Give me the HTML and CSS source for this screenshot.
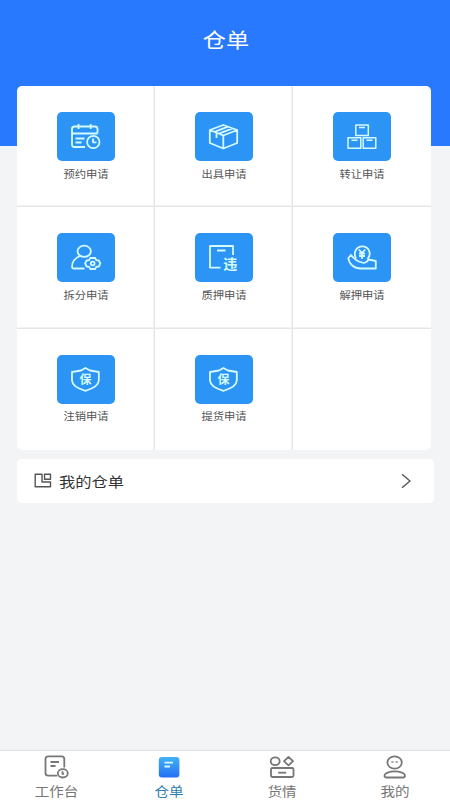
FILE: index.html
```html
<!DOCTYPE html>
<html lang="zh-CN">
<head>
<meta charset="utf-8">
<title>仓单</title>
<link rel="stylesheet" href="styles.css">
</head>
<body>
<div class="app">
  <header class="header"><h1 class="title">仓单</h1></header>
  <main class="main">
    <section class="grid">
      <a class="cell"><svg class="tile" viewBox="0 0 58 49"><path d="M40.500 21.500V17q0-2.500-2.500-2.500H17.500Q15 14.500 15 17v15.500q0 2.500 2.500 2.500H28M15 21.500h25.500M21.500 12v5M33.700 12v5M18.500 26.500h9M18.500 30.500h6"/><circle cx="36.300" cy="30" r="6.200"/><path d="M36 26.500V30.300h3.500"/></svg><span class="label">预约申请</span></a>
      <a class="cell"><svg class="tile" viewBox="0 0 58 49"><path d="M28.300 13L42.200 18V31L28.300 36.500 14.800 31V18ZM14.800 18L28.300 23.500 42.200 18M28.300 23.500V36.500M19.500 19.800L33 14.700M24 21.700L37.500 16.400M21.500 21V26"/></svg><span class="label">出具申请</span></a>
      <a class="cell"><svg class="tile thin" viewBox="0 0 58 49"><path d="M22.800 13h12.500v10.500H22.800ZM15 25.800h12.800v10.500H15ZM30.200 25.800h12.600v10.500H30.200ZM26 15.500h6M18.500 28.300h6M33.500 28.300h6"/></svg><span class="label">转让申请</span></a>
      <a class="cell"><svg class="tile" viewBox="0 0 58 49"><ellipse cx="27.200" cy="18.300" rx="6.700" ry="5.600"/><path d="M23 23C18 25 15 29 15 34Q15 35.500 16.500 35.500H27.500"/><path d="M33.200 25h5l1 2.200 2.600.3 1.500 3-1.500 3-2.600.3-1 2.200h-5l-1-2.200-2.600-.3-1.500-3 1.500-3 2.600-.3Z"/><circle cx="35.700" cy="30.500" r="1.900"/></svg><span class="label">拆分申请</span></a>
      <a class="cell"><svg class="tile" viewBox="0 0 58 49"><path d="M38 22V13H15V34.700H25.500M22 17.500h8.500"/><text class="wei" x="28.300" y="36">违</text></svg><span class="label">质押申请</span></a>
      <a class="cell"><svg class="tile" viewBox="0 0 58 49"><path d="M23 25.500C20 20 23 13.300 29.200 13.300C36 13.300 39 21 34.500 26"/><path d="M25.800 16.500L29 20 32.200 16.500M29 20v6M26 20.500h6M26 23h6"/><path d="M18 22L15.300 25C16 31 21 35.500 28 35.500H42.800V28L35.500 26.500C34 29.500 31 30.500 29 29.500C25 28.500 21 26 18 22Z"/></svg><span class="label">解押申请</span></a>
      <a class="cell"><svg class="tile" viewBox="0 0 58 49"><path d="M28.400 13L33 15.500 41.800 17V25.500Q41.500 32 28.400 35.800Q15.300 32 15 25.500V17L24 15.500Z"/><text class="bao" x="22.400" y="29">保</text></svg><span class="label">注销申请</span></a>
      <a class="cell"><svg class="tile" viewBox="0 0 58 49"><path d="M28.400 13L33 15.500 41.800 17V25.500Q41.500 32 28.400 35.800Q15.300 32 15 25.500V17L24 15.500Z"/><text class="bao" x="22.400" y="29">保</text></svg><span class="label">提货申请</span></a>
      <a class="cell"></a>
    </section>
    <a class="row">
      <svg class="row-icon" viewBox="0 0 18 16"><path d="M8 1.200H1.200V13.800H16.500V9H8ZM10.500 1.200h6v5h-6Z"/></svg>
      <span class="row-text">我的仓单</span>
      <svg class="chevron" viewBox="0 0 10 16"><path d="M1 1.200L9 8 1 14.800"/></svg>
    </a>
  </main>
  <nav class="tabs">
    <a class="tab"><svg class="tab-icon" viewBox="0 0 28 26"><path d="M22.300 13.500V5q0-2.700-2.700-2.700H6.200Q3.500 2.300 3.500 5v14q0 2.700 2.700 2.700H15M8.500 8h8.500M8.500 12h5"/><ellipse cx="20.800" cy="19.300" rx="5" ry="4.200"/><path d="M20.500 17.300v2.500h1.500"/></svg><span class="tab-label">工作台</span></a>
    <a class="tab active"><svg class="tab-icon" viewBox="0 0 28 26"><defs><linearGradient id="doc" x1="0" y1="0" x2="0" y2="1"><stop offset="0" stop-color="#43b3f5"/><stop offset="1" stop-color="#246ff5"/></linearGradient></defs><rect class="doc" x="3.800" y="3" width="20.600" height="20.500" rx="3" fill="url(#doc)"/><path class="lines" d="M9.500 8.700h8.500M9.500 12.500h5.500"/></svg><span class="tab-label">仓单</span></a>
    <a class="tab"><svg class="tab-icon" viewBox="0 0 28 26"><ellipse cx="7.200" cy="7.200" rx="4.500" ry="3.900"/><path d="M20.500 3L25 7.200 20.500 11.400 16 7.200Z"/><rect x="3" y="14" width="22.500" height="9" rx="1.500"/><path d="M10.200 18.700h8"/></svg><span class="tab-label">货情</span></a>
    <a class="tab"><svg class="tab-icon" viewBox="0 0 28 26"><ellipse cx="13.600" cy="8.500" rx="7.200" ry="6.200"/><path d="M10.500 7l2 2m0-2l-2 2M14.700 7l2 2m0-2l-2 2" stroke-width=".8"/><path d="M5.500 23.500C2.500 23.500 3 20 6 18.800Q14 16 21.500 18.800C24.500 20 25 23.500 22 23.500Z"/></svg><span class="tab-label">我的</span></a>
  </nav>
</div>
</body>
</html>
```

FILE: styles.css
```css
* { box-sizing: border-box; }
body {
  margin: 0;
  font-family: "Noto Sans CJK SC", sans-serif;
  background: #f2f4f6;
}
svg {
  display: block;
  fill: none;
  stroke: currentColor;
  stroke-linejoin: round;
}
.app {
  height: 800px;
  display: flex;
  flex-direction: column;
  overflow: hidden;
  background: linear-gradient(#2979ff 145.500px, #f2f4f6 145.500px);
}
.header {
  height: 86px;
  padding-top: 25px;
  text-align: center;
}
.title {
  margin: 0;
  font-size: 20px;
  line-height: 29px;
  font-weight: 400;
  color: #fff;
  transform: translateX(1px) scaleX(1.16);
}
.main { flex: 1; }
.grid {
  width: 414px;
  margin-left: 17.400px;
  display: grid;
  grid-template-columns: 138px 138px 138px;
  grid-template-rows: 121.400px 121.600px 121px;
  background: #fff;
  border-radius: 5px;
  overflow: hidden;
}
.cell {
  display: flex;
  flex-direction: column;
  align-items: center;
  padding-top: 26px;
  box-shadow: inset -1.500px -1.500px #e5e6e8;
}
.cell:nth-child(3n) { box-shadow: inset 0 -1.500px #e5e6e8; }
.cell:nth-child(n+7) { box-shadow: inset -1.500px 0 #e5e6e8; }
.cell:nth-child(9) { box-shadow: none; }
.tile {
  width: 58px;
  height: 49px;
  flex: none;
  border-radius: 5px;
  background: #2b94f4;
  color: #d5fbff;
  stroke-width: 1.800;
}
.thin { stroke-width: 1.500; }
.tile text {
  fill: currentColor;
  stroke: none;
  font-weight: 700;
}
.wei { font-size: 14px; }
.bao { font-size: 12px; }
.label {
  margin-top: 3.500px;
  font-size: 10px;
  line-height: 17px;
  color: #555;
  transform: scaleX(1.13);
}
.row {
  display: flex;
  align-items: center;
  width: 417px;
  height: 44px;
  margin: 9px 0 0 17px;
  padding: 0 23px 0 17px;
  background: #fff;
  border-radius: 5px;
}
.row-icon {
  width: 18px;
  height: 16px;
  color: #555;
  stroke-width: 1.400;
}
.row-text {
  margin-left: 7px;
  font-size: 14px;
  line-height: 22px;
  color: #333;
  transform: scaleX(1.16);
  transform-origin: left;
}
.chevron {
  width: 10px;
  height: 16px;
  margin-left: auto;
  color: #555;
  stroke-width: 1.400;
}
.tabs {
  display: grid;
  grid-template-columns: repeat(4, 112.800px);
  height: 50px;
  background: #fff;
  border-top: 1px solid #dfe0e2;
}
.tab {
  display: flex;
  flex-direction: column;
  align-items: center;
  padding-top: 3px;
  color: #777;
}
.tab-icon {
  width: 28px;
  height: 26px;
  flex: none;
  stroke-width: 1.800;
}
.tab-label {
  margin-top: 1px;
  font-size: 13px;
  line-height: 20px;
  transform: scaleX(1.12);
}
.active { color: #317eb0; }
.doc { stroke: none; }
.lines { stroke: #d5fbff; }
```
